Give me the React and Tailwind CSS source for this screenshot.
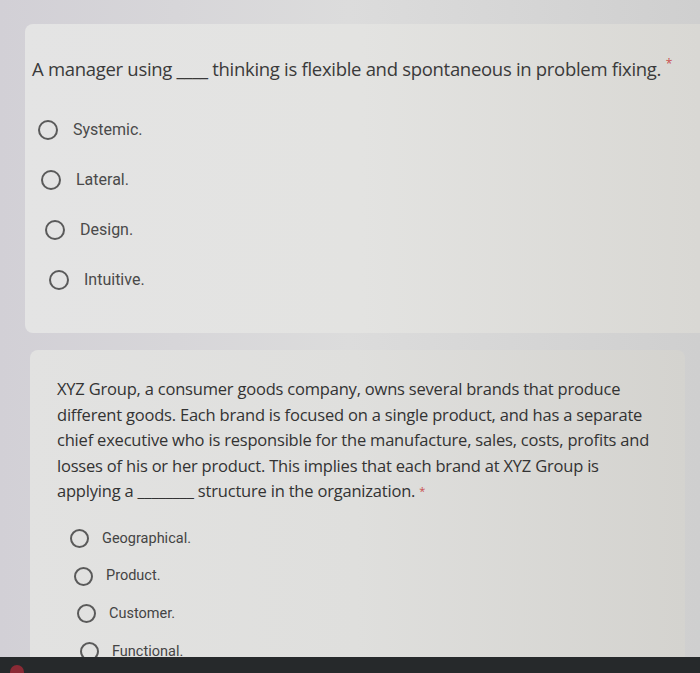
import React from 'react'

const q1 = [
  { label: 'Systemic.', pad: 'pl-[13px]' },
  { label: 'Lateral.', pad: 'pl-[16px]' },
  { label: 'Design.', pad: 'pl-[20px]' },
  { label: 'Intuitive.', pad: 'pl-[24px]' },
]

const q2 = [
  { label: 'Geographical.', pad: 'pl-[13px]' },
  { label: 'Product.', pad: 'pl-[17px]' },
  { label: 'Customer.', pad: 'pl-[20px]' },
  { label: 'Functional.', pad: 'pl-[23px]' },
]

function Radio({ size }) {
  return <span className={`${size} shrink-0 rounded-full border-2 border-[#5a5a5a]`} />
}

export default function App() {
  return (
    <div className="w-[700px] h-[673px] overflow-hidden flex flex-col bg-gradient-to-r from-[#d2d0d6] via-[#dcdcdc] to-[#cfcfcf] font-['Roboto',sans-serif]">
      <div className="flex-1 min-h-0 overflow-hidden flex flex-col pt-[24px] pl-[25px] gap-[17px]">
        <div className="h-[309px] shrink-0 rounded-l-lg bg-gradient-to-r from-[#e4e4e4] via-[#e3e3e1] to-[#d9d8d4] pt-[31px]">
          <p className="pl-[7px] text-[18.5px] text-[#3a3a3a] whitespace-nowrap font-['Open_Sans',sans-serif] tracking-[-0.3px]">
            A manager using ____ thinking is flexible and spontaneous in problem fixing.{' '}
            <span className="text-[#c9504f] text-[12px] align-top">*</span>
          </p>
          <div className="mt-[35px] flex flex-col gap-[26px]">
            {q1.map((o) => (
              <div key={o.label} className={`flex items-center gap-[15px] ${o.pad}`}>
                <Radio size="w-[20px] h-[20px]" />
                <span className="text-[16px] text-[#4a4a4a]">{o.label}</span>
              </div>
            ))}
          </div>
        </div>
        <div className="flex-1 min-h-0 overflow-hidden ml-[5px] mr-[15px] rounded-t-lg bg-gradient-to-r from-[#e2e2e1] via-[#dfdfdd] to-[#d4d3cf] pt-[26px] pl-[27px]">
          <p className="w-[598px] text-[16.5px] leading-[25.5px] tracking-[-0.2px] text-[#333] font-['Open_Sans',sans-serif]">
            XYZ Group, a consumer goods company, owns several brands that produce different goods. Each brand is focused on a single product, and has a separate chief executive who is responsible for the manufacture, sales, costs, profits and losses of his or her product. This implies that each brand at XYZ Group is applying a ________ structure in the organization.{' '}
            <span className="text-[#c9504f] text-[11px] align-top">*</span>
          </p>
          <div className="mt-[24px] flex flex-col gap-[16px]">
            {q2.map((o) => (
              <div key={o.label} className={`flex items-center gap-[13px] ${o.pad}`}>
                <Radio size="w-[19px] h-[19px]" />
                <span className="text-[14.5px] text-[#444]">{o.label}</span>
              </div>
            ))}
          </div>
        </div>
      </div>
      <div className="h-[16px] shrink-0 bg-[#26292b] flex items-end pl-[10px]">
        <span className="w-[14px] h-[8px] rounded-t-full bg-[#8a2a35]" />
      </div>
    </div>
  )
}
